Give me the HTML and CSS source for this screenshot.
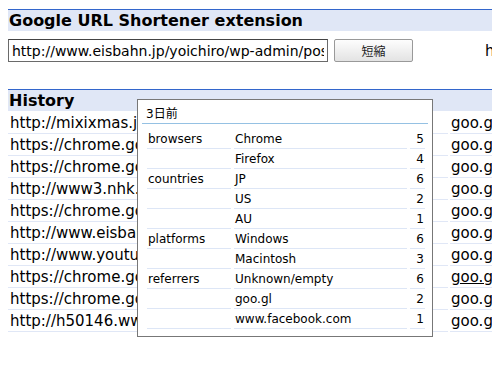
FILE: index.html
```html
<!DOCTYPE html>
<html>
<head>
    <meta charset="utf-8">
    <link rel="stylesheet" href="styles.css">
</head>
<body>
    <h2 class="head">Google URL Shortener extension</h2>
    <div class="form">
        <input class="url" type="text" value="http://www.eisbahn.jp/yoichiro/wp-admin/post.php?action=edit">
        <button class="shorten">短縮</button>
        <span class="result">http://goo.gl/</span>
    </div>
    <h2 class="head history-head">History</h2>
    <table class="history">
        <tr><td class="long">http://mixixmas.jp/</td><td class="short">goo.gl/</td></tr>
        <tr><td class="long">https://chrome.google.com/extensions/</td><td class="short">goo.gl/</td></tr>
        <tr><td class="long">https://chrome.google.com/extensions/</td><td class="short">goo.gl/</td></tr>
        <tr><td class="long">http://www3.nhk.or.jp/</td><td class="short">goo.gl/</td></tr>
        <tr><td class="long">https://chrome.google.com/extensions/</td><td class="short">goo.gl/</td></tr>
        <tr><td class="long">http://www.eisbahn.jp/yoichiro/</td><td class="short">goo.gl/</td></tr>
        <tr><td class="long">http://www.youtube.com/</td><td class="short">goo.gl/</td></tr>
        <tr><td class="long">https://chrome.google.com/extensions/</td><td class="short"><span class="hover">goo.gl/</span></td></tr>
        <tr><td class="long">https://chrome.google.com/extensions/</td><td class="short">goo.gl/</td></tr>
        <tr><td class="long">http://h50146.www5.hp.com/</td><td class="short">goo.gl/</td></tr>
    </table>

    <div class="popup">
        <div class="popup-title">3日前</div>
        <table class="stats">
            <tr><td class="cat">browsers</td><td class="name">Chrome</td><td class="num">5</td></tr>
            <tr><td class="cat"></td><td class="name">Firefox</td><td class="num">4</td></tr>
            <tr><td class="cat">countries</td><td class="name">JP</td><td class="num">6</td></tr>
            <tr><td class="cat"></td><td class="name">US</td><td class="num">2</td></tr>
            <tr><td class="cat"></td><td class="name">AU</td><td class="num">1</td></tr>
            <tr><td class="cat">platforms</td><td class="name">Windows</td><td class="num">6</td></tr>
            <tr><td class="cat"></td><td class="name">Macintosh</td><td class="num">3</td></tr>
            <tr><td class="cat">referrers</td><td class="name">Unknown/empty</td><td class="num">6</td></tr>
            <tr><td class="cat"></td><td class="name">goo.gl</td><td class="num">2</td></tr>
            <tr><td class="cat"></td><td class="name">www.facebook.com</td><td class="num">1</td></tr>
        </table>
    </div>
</body>
</html>
```

FILE: styles.css
```css
html {
    overflow: hidden;
}

body {
    margin: 8px;
    font-family: "DejaVu Sans", "Noto Sans CJK JP", sans-serif;
    color: #000;
    background-color: #fff;
}

.head {
    margin: 1px -8px 0 0;
    padding: 0 1px;
    height: 21px;
    line-height: 21px;
    font-size: 16px;
    font-weight: bold;
    border-top: 1px solid #3366cc;
    background-color: #e0e7f6;
}

.form {
    display: flex;
    align-items: center;
    margin-top: 8px;
    height: 23px;
    white-space: nowrap;
}

.url {
    flex-shrink: 0;
    box-sizing: border-box;
    width: 320px;
    height: 23px;
    margin: 0;
    padding: 0 3px;
    font-family: "DejaVu Sans", sans-serif;
    font-size: 14px;
    border: 1px solid #6a6a6a;
    border-top-color: #444;
    background: #fff;
    color: #000;
}

.shorten {
    flex-shrink: 0;
    box-sizing: border-box;
    width: 79px;
    height: 23px;
    margin: 0 0 0 6px;
    padding: 0;
    font-family: "Noto Sans CJK JP", sans-serif;
    font-size: 12px;
    color: #222;
    border: 1px solid #999;
    border-radius: 2px;
    background: linear-gradient(#fdfdfd, #e3e3e3);
}

.result {
    flex-shrink: 0;
    margin-left: 72px;
    font-size: 15px;
}

.history-head {
    margin-top: 27px;
    margin-bottom: 1px;
}

.history {
    table-layout: fixed;
    width: 640px;
    margin-left: -2px;
    border-collapse: separate;
    border-spacing: 2px 0;
    font-size: 15px;
}

.history td {
    height: 19px;
    line-height: 19px;
    padding: 2px 2px 0;
    border-bottom: 1px solid #e0e7f6;
    white-space: nowrap;
    overflow: hidden;
}

.history .long {
    width: 436px;
}

.history .short {
    padding-left: 1px;
}

.hover {
    text-decoration: underline;
}

.popup {
    position: absolute;
    left: 137px;
    top: 99px;
    width: 294px;
    height: 236px;
    background-color: #fff;
    border: 1px solid #777;
    font-size: 12px;
    color: #000;
}

.popup-title {
    margin: 0 4px;
    padding: 7px 4px 1px;
    line-height: 15px;
    border-bottom: 1px solid #95c1e3;
}

.stats {
    margin: 5px 0 0 6px;
    width: 284px;
    border-collapse: separate;
    border-spacing: 3px 0;
}

.stats td {
    height: 17px;
    padding: 2px 1px 0;
    line-height: 17px;
    border-bottom: 1px solid #dde6f6;
    white-space: nowrap;
}

.stats .cat {
    width: 82px;
}

.stats .num {
    width: 13px;
    text-align: right;
}
```
